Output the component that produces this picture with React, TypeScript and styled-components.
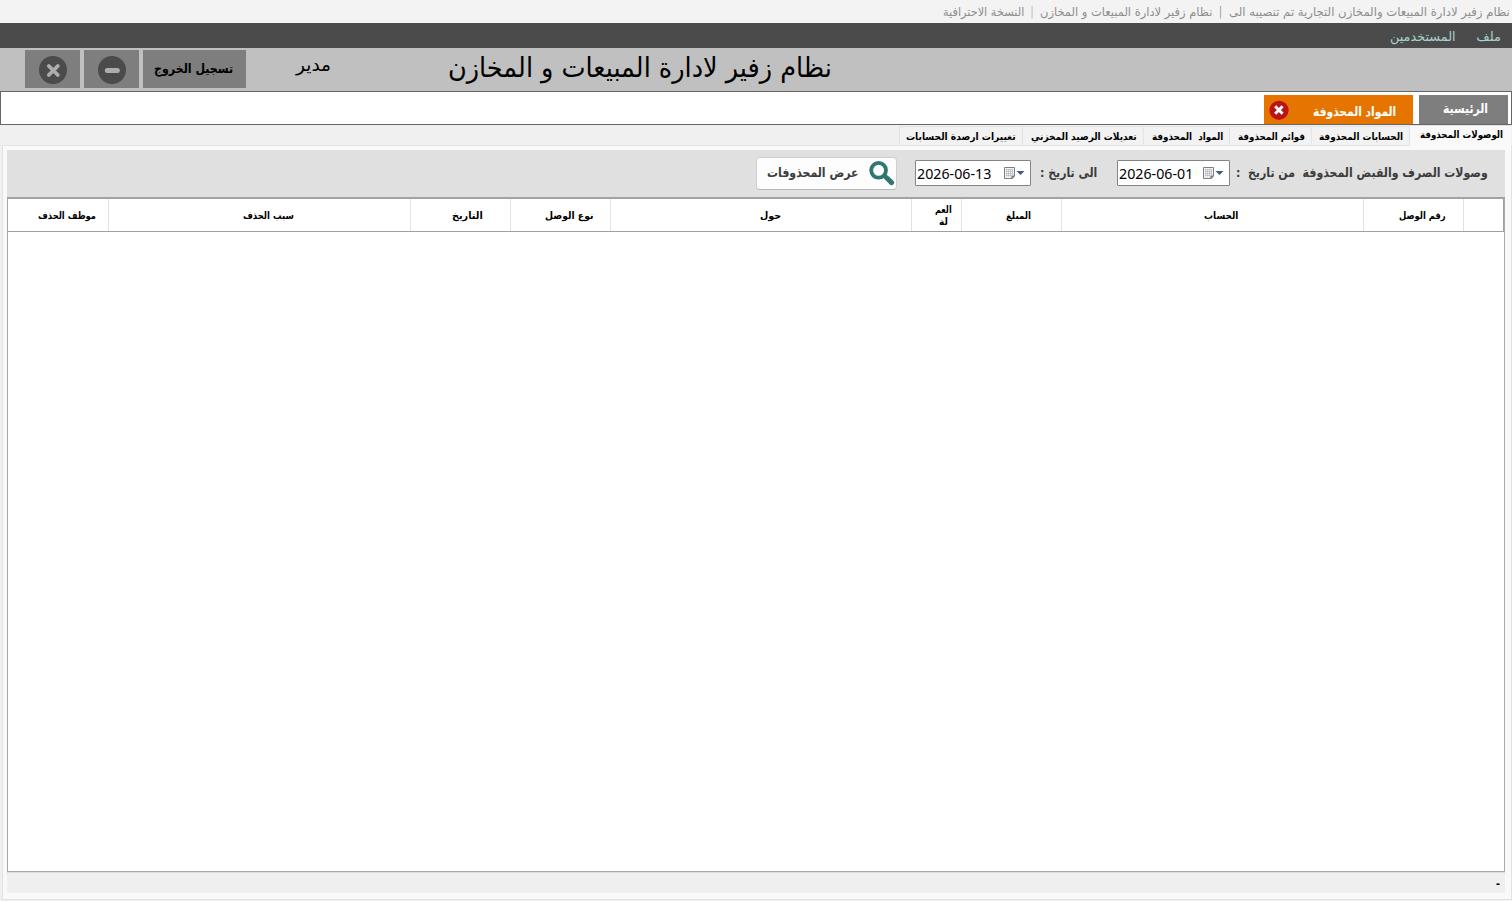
import React, { useLayoutEffect, useRef, useState } from "react";
import styled, { createGlobalStyle } from "styled-components";

const GlobalStyle = createGlobalStyle`
  * { box-sizing: border-box; }
  body {
    margin: 0;
    background: #f0f0f0;
    font-family: "DejaVu Sans", "Liberation Sans", sans-serif;
    overflow: hidden;
  }
`;

// Layout
const Window = styled.div`
  direction: rtl;
  width: 1512px;
  height: 901px;
  display: flex;
  flex-direction: column;
  background: #f0f0f0;
`;
const TitleBar = styled.div`
  height: 23px;
  flex: none;
  display: flex;
  gap: 7px;
  padding: 3px 2px 0;
  background: #f3f3f3;
  color: #8e8e8e;
`;
const MenuBar = styled.div`
  height: 25px;
  flex: none;
  display: flex;
  gap: 20px;
  padding: 5px 11px 0;
  background: #4b4b4b;
  color: #a6d2cb;
`;
const Header = styled.div`
  height: 43px;
  flex: none;
  display: flex;
  align-items: flex-start;
  padding: 2px 680px 0 25px;
  background: #c0c0c0;
  color: #000;
`;
const UserName = styled.div`
  margin: 4px 117px 0 50px;
`;
const HeaderButton = styled.button<{ $width: number }>`
  width: ${p => p.$width}px;
  height: 38px;
  flex: none;
  margin: 0 0 0 4px;
  padding: 0 2px 1px 0;
  border: none;
  display: flex;
  align-items: center;
  justify-content: center;
  background: #7e7e7e;
  color: #000;
  font-family: inherit;
  &:last-child { margin-left: 0; }
`;
const PageTabs = styled.div`
  height: 34px;
  flex: none;
  display: flex;
  gap: 6px;
  padding: 3px 3px 0;
  border: 1px solid #666;
  background: #fff;
`;
const PageTab = styled.div<{ $width: number; $active?: boolean }>`
  width: ${p => p.$width}px;
  height: 29px;
  display: flex;
  justify-content: space-between;
  padding: ${p => (p.$active ? "5px 17px 0 5px" : "3px 20px 0 24px")};
  background: ${p => (p.$active ? "#e67500" : "#7e7e7e")};
  color: #fff;
`;
const SubTabs = styled.div`
  height: 20px;
  flex: none;
  display: flex;
  align-items: flex-end;
  padding-right: 1px;
`;
const SubTab = styled.div<{ $width: number; $active?: boolean }>`
  width: ${p => p.$width}px;
  height: ${p => (p.$active ? 21 : 19)}px;
  margin-bottom: ${p => (p.$active ? -1 : 0)}px;
  position: relative;
  z-index: ${p => (p.$active ? 1 : 0)};
  padding: ${p => (p.$active ? "0 8px 0 0" : "1px 6px 0 0")};
  border: 1px solid #e3e3e3;
  border-right: none;
  border-bottom: none;
  background: ${p => (p.$active ? "#f9f9f9" : "#f2f2f2")};
  color: #000;
`;
const Panel = styled.div`
  height: 755px;
  flex: none;
  display: flex;
  flex-direction: column;
  margin-left: 2px;
  padding: 4px 6px 0 4px;
  border: 1px solid #e2e2e2;
  background: #f9f9f9;
`;
const Toolbar = styled.div`
  height: 47px;
  flex: none;
  display: flex;
  align-items: flex-start;
  padding: 7px 17px 0 0;
  background: #e0e0e0;
  color: #3c3c3c;
`;
const ToolbarLabel = styled.div<{ $gap: number }>`
  margin: 7px 0 0 ${p => p.$gap}px;
`;
const DateInput = styled.div<{ $width: number; $gap: number }>`
  direction: ltr;
  width: ${p => p.$width}px;
  height: 26px;
  margin: 3px 0 0 ${p => p.$gap}px;
  padding: 0 5px 0 1px;
  display: flex;
  align-items: center;
  justify-content: space-between;
  border: 1px solid #858585;
  border-radius: 1px;
  background: #fff;
  color: #000;
`;
const ShowButton = styled.button`
  width: 141px;
  height: 33px;
  display: flex;
  justify-content: space-between;
  align-items: flex-start;
  padding: 3px 1px 0 10px;
  border: 1px solid #cfcfcf;
  border-bottom-color: #b8b8b8;
  border-radius: 4px;
  background: #fdfdfd;
  color: #3c3c3c;
  font-family: inherit;
`;
const Grid = styled.div`
  height: 675px;
  flex: none;
  border: 1px solid #a9a9ad;
  border-top: 2px solid #a3a3a5;
  background: #fff;
`;
const GridHeader = styled.div`
  height: 33px;
  display: flex;
  border-bottom: 1px solid #a0a0a0;
`;
const HeaderCell = styled.div<{ $width: number; $pad?: number }>`
  width: ${p => p.$width}px;
  flex: none;
  display: flex;
  flex-direction: column;
  align-items: center;
  justify-content: center;
  padding: 1px 0 0 ${p => p.$pad ?? 18}px;
  border-left: 1px solid #e2e2e2;
  color: #000;
  &:first-child { border-right: 1px solid #a0a0a0; }
  &:last-child { border-left: none; }
`;
const StatusBar = styled.div`
  height: 21px;
  display: flex;
  padding: 2px 5px 0;
  border-top: 1px solid #dcdcdc;
  background: #efefef;
  font: bold 12px/18px "Liberation Sans", sans-serif;
  color: #000;
`;

const TextBox = styled.div<{ $width: number; $size: number; $line: number; $bold?: boolean; $font?: string }>`
  width: ${p => p.$width}px;
  height: ${p => p.$line}px;
  flex: none;
  font-size: ${p => p.$size}px;
  line-height: ${p => p.$line}px;
  font-weight: ${p => (p.$bold ? 700 : 400)};
  font-family: ${p => p.$font || "inherit"};
  white-space: pre;
`;
const TextInner = styled.span<{ $ltr?: boolean }>`
  display: inline-block;
  transform-origin: ${p => (p.$ltr ? "left" : "right")} center;
`;

type FitProps = { width: number; size: number; line?: number; bold?: boolean; font?: string; ltr?: boolean; children: string };

function FitText({ width, size, line = 18, bold, font, ltr, children }: FitProps) {
  const ref = useRef<HTMLSpanElement>(null);
  const [scale, setScale] = useState(1);
  useLayoutEffect(() => {
    if (ref.current && ref.current.offsetWidth) setScale(width / ref.current.offsetWidth);
  }, [width, size, children]);
  return (
    <TextBox $width={width} $size={size} $line={line} $bold={bold} $font={font}>
      <TextInner ref={ref} $ltr={ltr} style={{ transform: `scaleX(${scale})` }}>{children}</TextInner>
    </TextBox>
  );
}

const RoundIcon = ({ kind }: { kind: "close" | "minimize" }) => (
  <svg width="31" height="31" viewBox="0 0 31 31">
    <circle cx="17" cy="17" r="14" fill="#4b4b4b" />
    {kind === "close"
      ? <path d="M12.8 13l9 9M21.8 13l-9 9" stroke="#adadad" strokeWidth="3.8" strokeLinecap="round" />
      : <path d="M12.3 17.5h10" stroke="#adadad" strokeWidth="5" strokeLinecap="round" />}
  </svg>
);

const TabCloseIcon = () => (
  <svg width="20" height="20" viewBox="0 0 20 20">
    <circle cx="10" cy="10.3" r="9.6" fill="#bd1212" />
    <path d="M6.2 6.3l7.4 7.4M13.6 6.3l-7.4 7.4" stroke="#fff" strokeWidth="3" />
  </svg>
);

const CalendarIcon = () => (
  <svg width="22" height="14" viewBox="0 0 22 14">
    <path d="M1.5 1.5h10v8.5l-2 2.5h-8z" fill="#f3f3f6" stroke="#807c84" />
    <path d="M3 3.5h7M3 5.5h7M3 7.5h7M3 9.5h5M3.5 3v7.5M5.5 3v7.5M7.5 3v7.5M9.5 3v6" stroke="#bcbcc8" strokeWidth=".8" />
    <path d="M8.5 13l3.5-3.5H8.5z" fill="#77737a" />
    <path d="M13.5 5h8l-4 4z" fill="#47597c" />
  </svg>
);

const SearchIcon = () => (
  <svg width="26" height="26" viewBox="0 0 26 26">
    <circle cx="9.6" cy="9.3" r="7.4" fill="#fff" stroke="#30776f" strokeWidth="3.8" />
    <path d="M14.6 14l3.2 3" stroke="#30776f" strokeWidth="3.8" />
    <path d="M17.6 16.8l5 4.8" stroke="#30776f" strokeWidth="5" strokeLinecap="round" />
  </svg>
);

const subTabs = [
  { text: "الوصولات المحذوفة", width: 102, textWidth: 83, active: true },
  { text: "الحسابات المحذوفة", width: 98, textWidth: 84 },
  { text: "قوائم المحذوفة", width: 82, textWidth: 67 },
  { text: "المواد  المحذوفة", width: 86, textWidth: 71 },
  { text: "تعديلات الرصيد المخزني", width: 121, textWidth: 106 },
  { text: "تغييرات ارصدة الحسابات", width: 123, textWidth: 110 },
];

const columns = [
  { lines: [], width: 41 },
  { lines: [["رقم الوصل", 47]], width: 100 },
  { lines: [["الحساب", 34]], width: 302, pad: 17 },
  { lines: [["المبلغ", 25]], width: 100, pad: 14 },
  { lines: [["العم", 17], ["لة", 9]], width: 50, pad: 14 },
  { lines: [["حول", 21]], width: 301, pad: 19 },
  { lines: [["نوع الوصل", 48]], width: 100, pad: 17 },
  { lines: [["التاريخ", 31]], width: 100, pad: 14 },
  { lines: [["سبب الحذف", 51]], width: 302, pad: 18 },
  { lines: [["موظف الحذف", 58]], width: 100, pad: 19 },
];

const dateFont = '"Noto Sans", "Open Sans", sans-serif';

export default function App() {
  return (
    <Window>
      <GlobalStyle />
      <TitleBar>
        <FitText width={281} size={12}>نظام زفير لادارة المبيعات والمخازن التجارية تم تنصيبه الى</FitText>
        <FitText width={3} size={12}>|</FitText>
        <FitText width={172} size={12}>نظام زفير لادارة المبيعات و المخازن</FitText>
        <FitText width={2} size={12}>|</FitText>
        <FitText width={81} size={12}>النسخة الاحترافية</FitText>
      </TitleBar>
      <MenuBar>
        <FitText width={25} size={13}>ملف</FitText>
        <FitText width={66} size={13}>المستخدمين</FitText>
      </MenuBar>

      <Header>
        <FitText width={384} size={27} line={35}>نظام زفير لادارة المبيعات و المخازن</FitText>
        <UserName><FitText width={35} size={18} line={22}>مدير</FitText></UserName>
        <HeaderButton $width={103}><FitText width={79} size={13} bold>تسجيل الخروج</FitText></HeaderButton>
        <HeaderButton $width={55}><RoundIcon kind="minimize" /></HeaderButton>
        <HeaderButton $width={55}><RoundIcon kind="close" /></HeaderButton>
      </Header>

      <PageTabs>
        <PageTab $width={89}><FitText width={45} size={13} line={21} bold>الرئيسية</FitText></PageTab>
        <PageTab $width={149} $active>
          <FitText width={83} size={13} line={23} bold>المواد المحذوفة</FitText>
          <TabCloseIcon />
        </PageTab>
      </PageTabs>

      <SubTabs>
        {subTabs.map(t => (
          <SubTab key={t.text} $width={t.width} $active={t.active}>
            <FitText width={t.textWidth} size={10} line={17} bold>{t.text}</FitText>
          </SubTab>
        ))}
      </SubTabs>

      <Panel>
        <Toolbar>
          <ToolbarLabel $gap={6}><FitText width={252} size={13} bold>وصولات الصرف والقبض المحذوفة  من تاريخ  :</FitText></ToolbarLabel>
          <DateInput $width={113} $gap={20}>
            <FitText width={74} size={15} line={24} font={dateFont} ltr>2026-06-01</FitText>
            <CalendarIcon />
          </DateInput>
          <ToolbarLabel $gap={9}><FitText width={57} size={13} bold>الى تاريخ :</FitText></ToolbarLabel>
          <DateInput $width={116} $gap={18}>
            <FitText width={74} size={15} line={24} font={dateFont} ltr>2026-06-13</FitText>
            <CalendarIcon />
          </DateInput>
          <ShowButton>
            <SearchIcon />
            <FitText width={91} size={13} line={24} bold>عرض المحذوفات</FitText>
          </ShowButton>
        </Toolbar>

        <Grid>
          <GridHeader>
            {columns.map((c, i) => (
              <HeaderCell key={i} $width={c.width} $pad={c.pad}>
                {c.lines.map(([text, width]) => (
                  <FitText key={text} width={width as number} size={10} line={12} bold>{text as string}</FitText>
                ))}
              </HeaderCell>
            ))}
          </GridHeader>
        </Grid>
        <StatusBar>-</StatusBar>
      </Panel>
    </Window>
  );
}
